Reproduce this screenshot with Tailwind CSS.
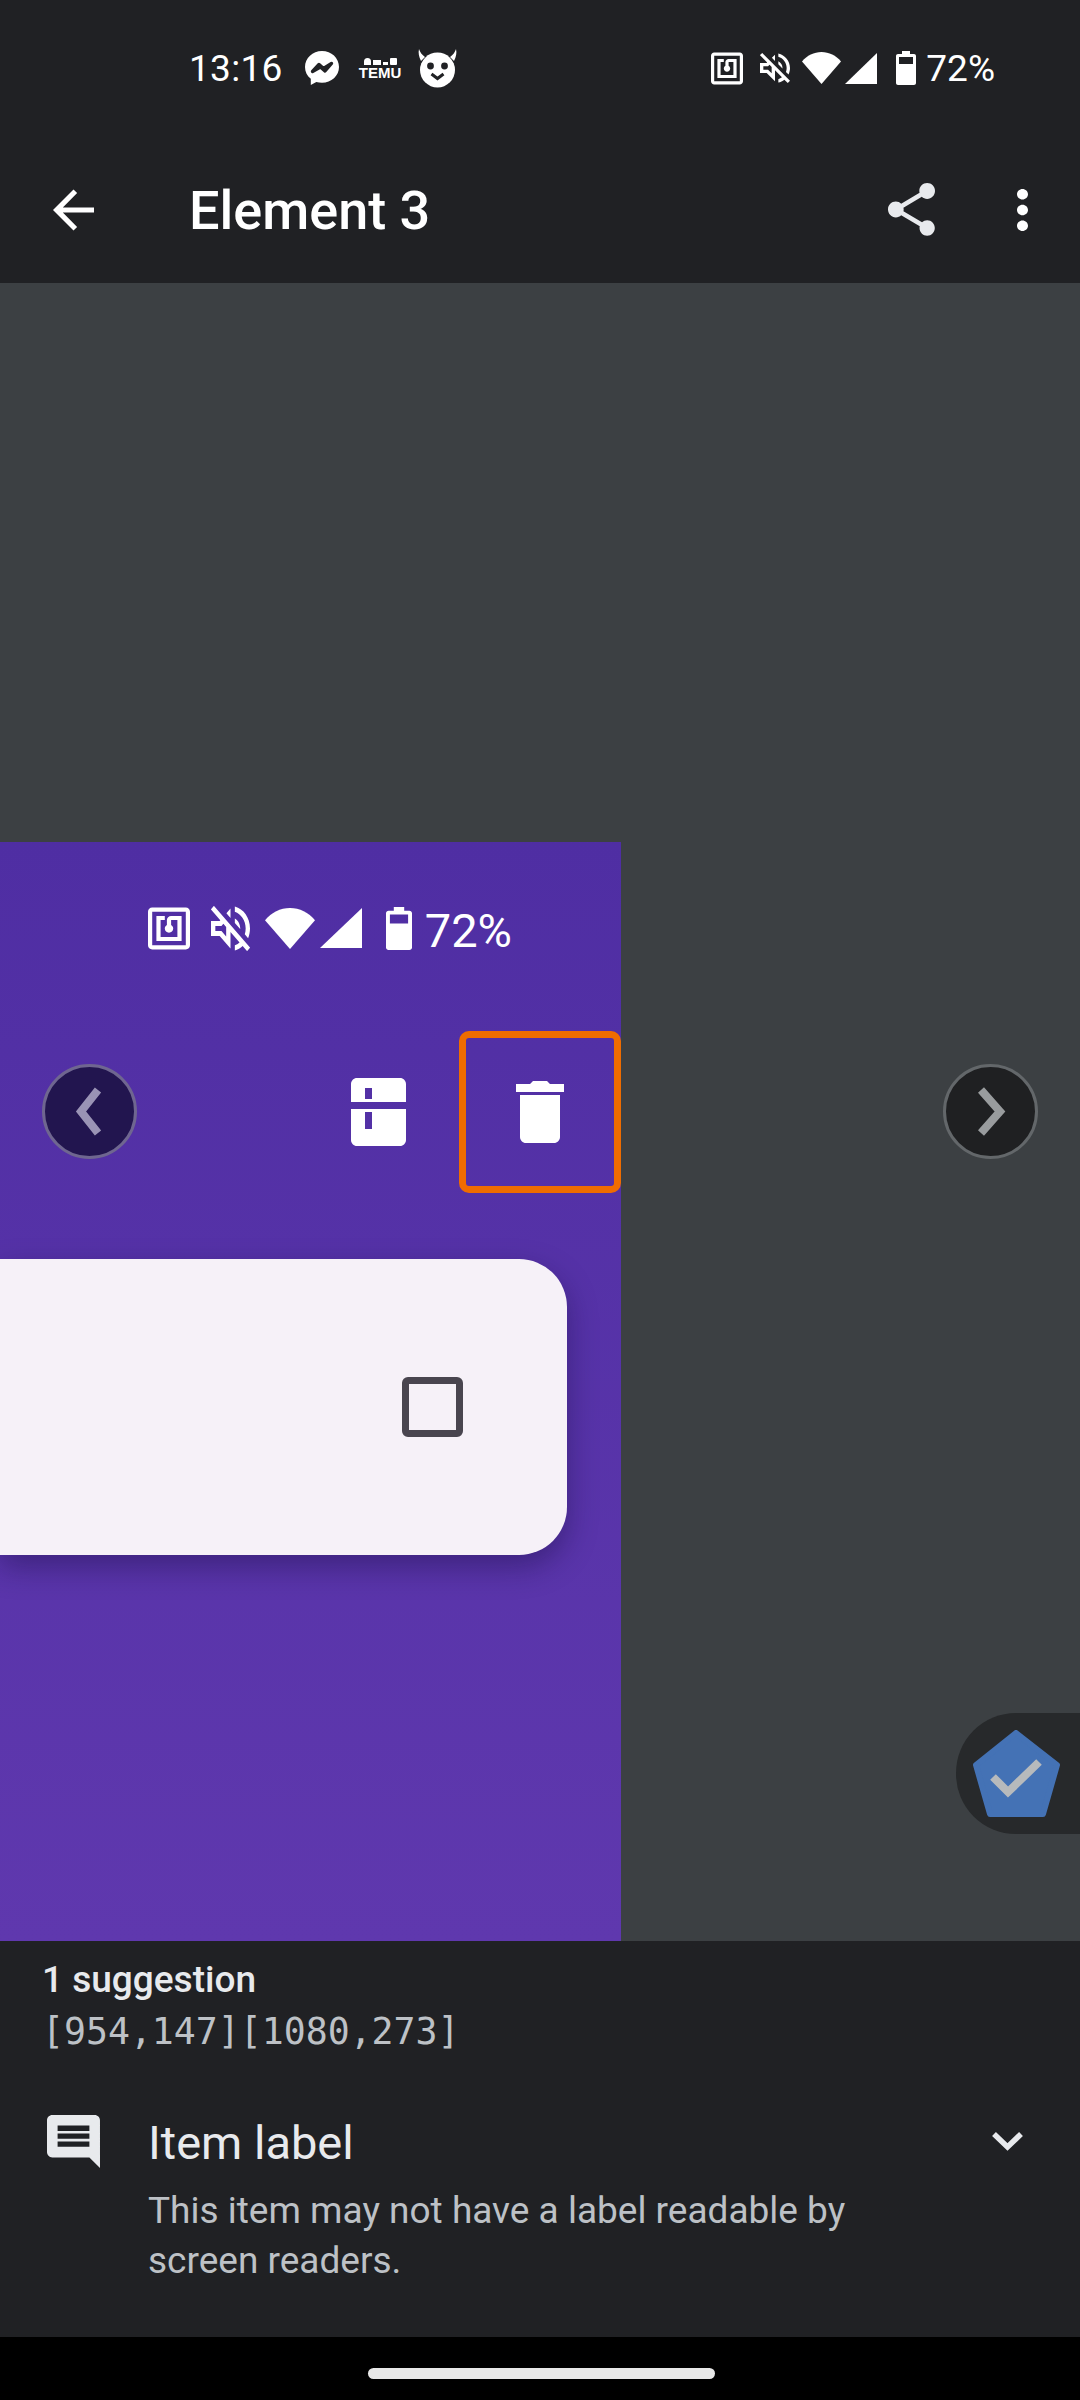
<!DOCTYPE html>
<html lang="en">
<head>
    <meta charset="UTF-8" />
    <meta name="viewport" content="width=device-width, initial-scale=1.0" />
    <script src="https://cdn.jsdelivr.net/npm/@tailwindcss/browser@4"></script>
    <title>Element 3</title>
</head>
<body class="bg-black font-['Roboto',sans-serif] text-white">
<div class="flex flex-col w-[1080px] h-[2400px] overflow-hidden">

    <!-- status bar -->
    <div class="flex items-center h-[136px] pl-[189px] pr-[85px] bg-[#202124] shrink-0">
        <span class="text-[37px] leading-none tracking-[0.3px] w-[91px]">13:16</span>
        <svg class="ml-[25px] w-[34px] h-[34px]" viewBox="0 0 34 34"><path fill="#fff" d="M17 0C7.6 0 0 7 0 16c0 4.9 2.2 9 5.8 11.8V34l5.5-3.1c1.8.5 3.7.8 5.7.8 9.4 0 17-7 17-15.8C34 7 26.4 0 17 0z"/><path fill="none" stroke="#202124" stroke-width="3.4" stroke-linejoin="round" d="M7.5 20.5l6.5-7 4.5 4 8-5-6.5 7.500-4.500-4z"/></svg>
        <div class="ml-[21px] w-[40px] flex flex-col items-center">
            <div class="flex items-end gap-[2px] h-[8px]">
                <span class="w-[7px] h-[7px] bg-white rounded-t-full"></span>
                <span class="w-[8px] h-[5px] bg-white"></span>
                <span class="w-[5px] h-[3px] bg-white"></span>
                <span class="w-[7px] h-[7px] bg-white rounded-[1px]"></span>
            </div>
            <span class="text-[15px] leading-[13px] mt-[1px] font-bold font-['Liberation_Sans',sans-serif]">TEMU</span>
        </div>
        <svg class="ml-[18px] w-[39px] h-[39px]" viewBox="0 0 39 39"><path fill="#fff" d="M1 0c1 3 3 6 6 8l-4 4C1 8 0 4 1 0zM38 0c-1 3-3 6-6 8l4 4c2-4 3-8 2-12z"/><circle cx="19.500" cy="21" r="17.500" fill="#fff"/><circle cx="12.500" cy="17" r="3.400" fill="#202124"/><circle cx="26.500" cy="17" r="3.400" fill="#202124"/><path fill="none" stroke="#202124" stroke-width="3" d="M13.500 25l6 4.500 6-4.500"/></svg>

        <div class="ml-auto flex items-center">
            <svg class="w-[32px] h-[33px]" viewBox="2 2 20 20" fill="#fff"><path d="M20 2H4c-1.100 0-2 .9-2 2v16c0 1.100.9 2 2 2h16c1.100 0 2-.9 2-2V4c0-1.100-.9-2-2-2zm0 18H4V4h16v16zM18 6h-5c-1.100 0-2 .9-2 2v2.280c-.6.350-1 .98-1 1.720 0 1.100.9 2 2 2s2-.9 2-2c0-.74-.4-1.380-1-1.720V8h3v8H8V8h2V6H6v12h12V6z"/></svg>
            <svg class="ml-[17px] w-[30px] h-[32px]" viewBox="3 3 18 18" fill="#fff"><path d="M4.340 2.930L2.930 4.340 7.290 8.700 7 9H3v6h4l5 5v-6.590l4.180 4.180c-.65.490-1.380.88-2.180 1.110v2.060c1.340-.3 2.570-.92 3.610-1.750l2.050 2.050 1.410-1.410L4.340 2.930zM10 15.170L7.830 13H5v-2h2.830l.88-.88L10 11.410v3.760zM19 12c0 .82-.15 1.610-.41 2.340l1.530 1.530c.56-1.170.88-2.480.88-3.870 0-4.280-2.990-7.860-7-8.770v2.060c2.890.86 5 3.540 5 6.710zm-7-8l-1.880 1.880L12 7.760zm4.500 8c0-1.770-1.020-3.290-2.500-4.030v1.790l2.480 2.480c.01-.08.02-.16.02-.24z"/></svg>
            <svg class="ml-[12px] w-[39px] h-[32px]" viewBox="0 0 39 32"><path fill="#fff" d="M0 9.500C5 3.500 12 0 19.500 0S34 3.500 39 9.500L19.500 32z"/></svg>
            <svg class="ml-[4px] w-[32px] h-[31px]" viewBox="0 0 32 31"><path fill="#fff" d="M32 0v31H0z"/></svg>
            <svg class="ml-[19px] w-[20px] h-[34px]" viewBox="0 0 20 34"><path fill="#fff" fill-rule="evenodd" d="M6 0h8v3h4c1.100 0 2 .9 2 2v27c0 1.100-.9 2-2 2H2c-1.100 0-2-.9-2-2V5c0-1.100.9-2 2-2h4zM3 6v7h14V6z"/></svg>
            <span class="ml-[10px] text-[37px] leading-none">72%</span>
        </div>
    </div>

    <!-- app bar -->
    <div class="flex items-center h-[147px] pl-[53px] pr-[52px] bg-[#202124] shrink-0">
        <svg class="w-[41px] h-[42px]" viewBox="4 4 16 16" fill="#fff"><path d="M20 11H7.830l5.590-5.590L12 4l-8 8 8 8 1.410-1.410L7.830 13H20v-2z"/></svg>
        <h1 class="ml-[95px] mt-[2px] text-[54px] leading-none font-medium">Element 3</h1>
        <svg class="ml-auto w-[47px] h-[53px]" viewBox="3 2 18 20" fill="#e8eaed" preserveAspectRatio="none"><path d="M18 16.080c-.76 0-1.440.3-1.960.77L8.910 12.700c.05-.23.09-.46.09-.7s-.04-.47-.09-.7l7.050-4.110c.54.5 1.250.81 2.040.81 1.660 0 3-1.340 3-3s-1.340-3-3-3-3 1.340-3 3c0 .24.04.47.09.7L8.040 9.810C7.500 9.310 6.790 9 6 9c-1.660 0-3 1.340-3 3s1.340 3 3 3c.79 0 1.500-.31 2.040-.81l7.120 4.160c-.05.21-.08.43-.08.65 0 1.610 1.310 2.920 2.920 2.920 1.610 0 2.920-1.310 2.920-2.920s-1.310-2.920-2.920-2.920z"/></svg>
        <svg class="ml-[82px] w-[11px] h-[42px]" viewBox="10 4 4 16" fill="#fff" preserveAspectRatio="none"><path d="M12 8c1.100 0 2-.9 2-2s-.9-2-2-2-2 .9-2 2 .9 2 2 2zm0 2c-1.100 0-2 .9-2 2s.9 2 2 2 2-.9 2-2-.9-2-2-2zm0 6c-1.100 0-2 .9-2 2s.9 2 2 2 2-.9 2-2-.9-2-2-2z"/></svg>
    </div>

    <!-- screenshot preview -->
    <div class="relative flex items-end h-[1658px] bg-[#3c4043] shrink-0">
        <div class="w-[621px] h-[1099px] bg-linear-to-b from-[#4f2ea3] to-[#5f38ae]">
            <div class="flex items-center justify-end h-[172px] pr-[109px]">
                <svg class="w-[42px] h-[43px]" viewBox="2 2 20 20" fill="#fff"><path d="M20 2H4c-1.100 0-2 .9-2 2v16c0 1.100.9 2 2 2h16c1.100 0 2-.9 2-2V4c0-1.100-.9-2-2-2zm0 18H4V4h16v16zM18 6h-5c-1.100 0-2 .9-2 2v2.280c-.6.350-1 .98-1 1.720 0 1.100.9 2 2 2s2-.9 2-2c0-.74-.4-1.380-1-1.720V8h3v8H8V8h2V6H6v12h12V6z"/></svg>
                <svg class="ml-[21px] w-[39px] h-[45px]" viewBox="3 3 18 18" fill="#fff" preserveAspectRatio="none"><path d="M4.340 2.930L2.930 4.340 7.290 8.700 7 9H3v6h4l5 5v-6.590l4.180 4.180c-.65.490-1.380.88-2.180 1.110v2.060c1.340-.3 2.570-.92 3.610-1.750l2.050 2.050 1.410-1.410L4.340 2.930zM10 15.170L7.830 13H5v-2h2.830l.88-.88L10 11.410v3.760zM19 12c0 .82-.15 1.610-.41 2.340l1.530 1.530c.56-1.170.88-2.480.88-3.870 0-4.280-2.990-7.860-7-8.770v2.060c2.890.86 5 3.540 5 6.710zm-7-8l-1.880 1.880L12 7.760zm4.500 8c0-1.770-1.020-3.290-2.500-4.030v1.790l2.480 2.480c.01-.08.02-.16.02-.24z"/></svg>
                <svg class="ml-[15px] w-[50px] h-[41px]" viewBox="0 0 39 32" preserveAspectRatio="none"><path fill="#fff" d="M0 9.500C5 3.500 12 0 19.500 0S34 3.500 39 9.500L19.500 32z"/></svg>
                <svg class="ml-[5px] w-[42px] h-[40px]" viewBox="0 0 32 31" preserveAspectRatio="none"><path fill="#fff" d="M32 0v31H0z"/></svg>
                <svg class="ml-[24px] w-[26px] h-[43px]" viewBox="0 0 20 34" preserveAspectRatio="none"><path fill="#fff" fill-rule="evenodd" d="M6 0h8v3h4c1.100 0 2 .9 2 2v27c0 1.100-.9 2-2 2H2c-1.100 0-2-.9-2-2V5c0-1.100.9-2 2-2h4zM3 6v7h14V6z"/></svg>
                <span class="ml-[13px] mt-[4px] text-[47px] leading-none">72%</span>
            </div>
            <div class="flex items-center justify-end mt-[17px]">
                <svg class="mr-[53px] w-[55px] h-[68px]" viewBox="0 0 55 68"><path fill="#fff" fill-rule="evenodd" d="M6 0h43c3.300 0 6 2.700 6 6v18H0V6c0-3.300 2.700-6 6-6zm8 10v11h7V10zM0 31h55v31c0 3.300-2.700 6-6 6H6c-3.300 0-6-2.700-6-6zm14 3v17h7V34z"/></svg>
                <div class="flex items-center justify-center w-[162px] h-[162px] border-[7px] border-[#ef6c00] rounded-[10px]">
                    <svg class="w-[48px] h-[62px]" viewBox="0 0 48 62"><path fill="#fff" d="M0 3h14l3-3h14l3 3h14v8H0zM4 14h40v42c0 3.300-2.700 6-6 6H10c-3.300 0-6-2.700-6-6z"/></svg>
                </div>
            </div>
            <div class="flex items-center justify-end w-[567px] h-[296px] mt-[66px] pr-[104px] bg-[#f6f1f8] rounded-r-[48px] shadow-[0_12px_30px_rgba(20,10,60,0.4)]">
                <div class="w-[61px] h-[60px] border-[7px] border-[#49454f] rounded-[6px]"></div>
            </div>
        </div>

        <!-- prev / next overlays -->
        <div class="absolute left-[42px] top-[781px] flex items-center justify-center w-[95px] h-[95px] bg-[#22154f] border-[3px] border-[#6f6690] rounded-full">
            <svg class="w-[95px] h-[95px] shrink-0" viewBox="0 0 95 95"><path fill="none" stroke="#9a93b5" stroke-width="8" d="M56 26L39 47.500 56 69"/></svg>
        </div>
        <div class="absolute right-[42px] top-[781px] flex items-center justify-center w-[95px] h-[95px] bg-[#1f2022] border-[3px] border-[#63676a] rounded-full">
            <svg class="w-[95px] h-[95px] shrink-0" viewBox="0 0 95 95"><path fill="none" stroke="#999c9e" stroke-width="8" d="M38 26L57 47.500 38 69"/></svg>
        </div>

        <!-- floating badge -->
        <div class="absolute right-0 top-[1430px] flex items-center w-[124px] h-[121px] pl-[17px] bg-[#27292b] rounded-l-[60px]">
            <svg class="w-[87px] h-[87px]" viewBox="0 0 87 87"><path fill="#4472b5" stroke="#4472b5" stroke-width="6" stroke-linejoin="round" d="M43 3L84 35 70 84H17L3 35z"/><path fill="none" stroke="#b7babc" stroke-width="8" d="M20 47l15 15 31-30"/></svg>
        </div>
    </div>

    <!-- suggestion panel -->
    <div class="h-[396px] pl-[42px] pr-[57px] pt-[17px] bg-[#202124] shrink-0">
        <p class="text-[37px] leading-[44px] font-medium text-[#e8eaed]">1 suggestion</p>
        <p class="text-[36.500px] leading-[44px] mt-[8px] font-['DejaVu_Sans_Mono',monospace] text-[#bdc1c6]">[954,147][1080,273]</p>
        <div class="flex mt-[54px]">
            <svg class="ml-[5px] mt-[7px] w-[53px] h-[53px] shrink-0" viewBox="2 2 20 20" fill="#e8eaed"><path d="M21.990 4c0-1.100-.89-2-1.990-2H4c-1.100 0-2 .9-2 2v12c0 1.100.9 2 2 2h14l4 4-.01-18zM18 14H6v-2h12v2zm0-3H6V9h12v2zm0-3H6V6h12v2z"/></svg>
            <div class="ml-[48px] w-[760px]">
                <p class="mt-[8px] text-[47px] leading-[54px] text-[#e8eaed]">Item label</p>
                <p class="text-[37px] leading-[50px] mt-[16px] text-[#bdc1c6]">This item may not have a label readable by<br>screen readers.</p>
            </div>
            <svg class="ml-auto mt-[24px] w-[31px] h-[20px]" viewBox="0 0 31 20"><path fill="none" stroke="#e8eaed" stroke-width="5.500" d="M2 2l13.500 13L29 2"/></svg>
        </div>
    </div>

    <!-- nav bar -->
    <div class="flex items-start justify-center flex-1 pl-[2px] pt-[31px] bg-black">
        <div class="w-[347px] h-[11px] bg-[#e8e8e8] rounded-full"></div>
    </div>
</div>
</body>
</html>
